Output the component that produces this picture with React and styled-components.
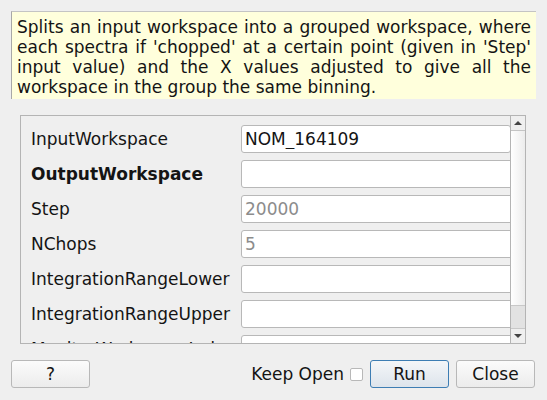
import React from 'react';
import styled, { createGlobalStyle } from 'styled-components';

const GlobalStyle = createGlobalStyle`
  body {
    margin: 0;
    background: #efefef;
    font-family: "DejaVu Sans", "Noto Sans", sans-serif;
    color: #1b1b1b;
  }
`;

const properties = [
  { name: 'InputWorkspace', value: 'NOM_164109', narrow: true },
  { name: 'OutputWorkspace', bold: true },
  { name: 'Step', placeholder: '20000' },
  { name: 'NChops', placeholder: '5' },
  { name: 'IntegrationRangeLower' },
  { name: 'IntegrationRangeUpper' },
  { name: 'MonitorWorkspaceIndex' },
];

function App() {
  return (
    <Dialog>
      <GlobalStyle />
      <Description>
        Splits an input workspace into a grouped workspace, where each spectra if
        'chopped' at a certain point (given in 'Step' input value) and the X values
        adjusted to give all the workspace in the group the same binning.
      </Description>

      <ScrollArea>
        <Content>
          {properties.map((p) => (
            <React.Fragment key={p.name}>
              <Label $bold={p.bold}>{p.name}</Label>
              <Field
                $narrow={p.narrow}
                defaultValue={p.value}
                placeholder={p.placeholder}
              />
            </React.Fragment>
          ))}
        </Content>
        <ScrollBar>
          <ArrowButton>
            <Arrow $up />
          </ArrowButton>
          <Track>
            <Handle />
          </Track>
          <ArrowButton>
            <Arrow />
          </ArrowButton>
        </ScrollBar>
      </ScrollArea>

      <ButtonRow>
        <Button>?</Button>
        <Spacer />
        <KeepOpen>
          Keep Open
          <CheckBox />
        </KeepOpen>
        <Button $primary>Run</Button>
        <Button>Close</Button>
      </ButtonRow>
    </Dialog>
  );
}

export default App;

const Dialog = styled.div`
  width: 547px;
  height: 400px;
  box-sizing: border-box;
  padding-top: 11px;
  display: flex;
  flex-direction: column;
  overflow: hidden;
`;

const Description = styled.div`
  margin-left: 11px;
  width: 525px;
  height: 88px;
  box-sizing: border-box;
  padding: 5px 5px 0 5px;
  background: #ffffdc;
  border-top: 1px solid #c4c4c4;
  border-left: 1px solid #a8a8a8;
  font-size: 17px;
  line-height: 20px;
  text-align: justify;
  color: #141414;
`;

const ScrollArea = styled.div`
  margin: 16px 0 0 20px;
  width: 506px;
  height: 229px;
  box-sizing: border-box;
  border: 1px solid #b4b4b4;
  display: flex;
  overflow: hidden;
`;

const Content = styled.div`
  flex: 1;
  overflow: hidden;
  padding: 9px 0 0 10px;
  display: grid;
  grid-template-columns: 210px 273px;
  grid-auto-rows: 28px;
  row-gap: 7px;
  align-content: start;
`;

const Label = styled.div`
  display: flex;
  align-items: center;
  font-size: 17px;
  font-weight: ${(p) => (p.$bold ? 'bold' : 'normal')};
  white-space: nowrap;
  color: #141414;
`;

const Field = styled.input`
  width: ${(p) => (p.$narrow ? '270px' : '273px')};
  height: 28px;
  box-sizing: border-box;
  border: 1px solid #b8b8b8;
  border-radius: 3px;
  background: #fff;
  padding: 0 3px;
  font-family: "DejaVu Sans", sans-serif;
  font-size: 17px;
  color: #141414;
  outline: none;
  &::placeholder {
    color: #8c8c8c;
  }
`;

const ScrollBar = styled.div`
  width: 14px;
  flex: none;
  display: flex;
  flex-direction: column;
  border-left: 1px solid #b4b4b4;
  background: #efefef;
`;

const ArrowButton = styled.div`
  height: 14px;
  flex: none;
  display: flex;
  align-items: center;
  justify-content: center;
  background: #efefef;
  &:first-child {
    border-bottom: 1px solid #c4c4c4;
  }
`;

const Arrow = styled.div`
  width: 0;
  height: 0;
  border-left: 4px solid transparent;
  border-right: 4px solid transparent;
  ${(p) =>
    p.$up
      ? 'border-bottom: 4px solid #444;'
      : 'border-top: 4px solid #444;'}
`;

const Track = styled.div`
  flex: 1;
  display: flex;
  flex-direction: column;
  justify-content: flex-end;
  background: linear-gradient(to right, #ffffff, #ececec);
`;

const Handle = styled.div`
  height: 22px;
  background: #e2e2e2;
  border-top: 1px solid #c8c8c8;
  border-bottom: 1px solid #c8c8c8;
`;

const ButtonRow = styled.div`
  margin-top: 16px;
  padding: 0 12px 0 11px;
  height: 28px;
  display: flex;
  align-items: center;
  gap: 7px;
`;

const Spacer = styled.div`
  flex: 1;
`;

const KeepOpen = styled.label`
  display: flex;
  align-items: center;
  gap: 6px;
  font-size: 17px;
  color: #141414;
`;

const CheckBox = styled.span`
  width: 13px;
  height: 13px;
  box-sizing: border-box;
  border: 1px solid #b8b8b8;
  border-radius: 2px;
  background: #fff;
`;

const Button = styled.button`
  width: 79px;
  height: 28px;
  box-sizing: border-box;
  border: 1px solid ${(p) => (p.$primary ? '#3d7db3' : '#b8b8b8')};
  border-radius: 3px;
  background: ${(p) =>
    p.$primary
      ? 'linear-gradient(#f4f6f8, #dde4eb)'
      : 'linear-gradient(#fbfbfb, #ececec)'};
  font-family: "DejaVu Sans", sans-serif;
  font-size: 17px;
  color: #141414;
  padding: 0;
`;
